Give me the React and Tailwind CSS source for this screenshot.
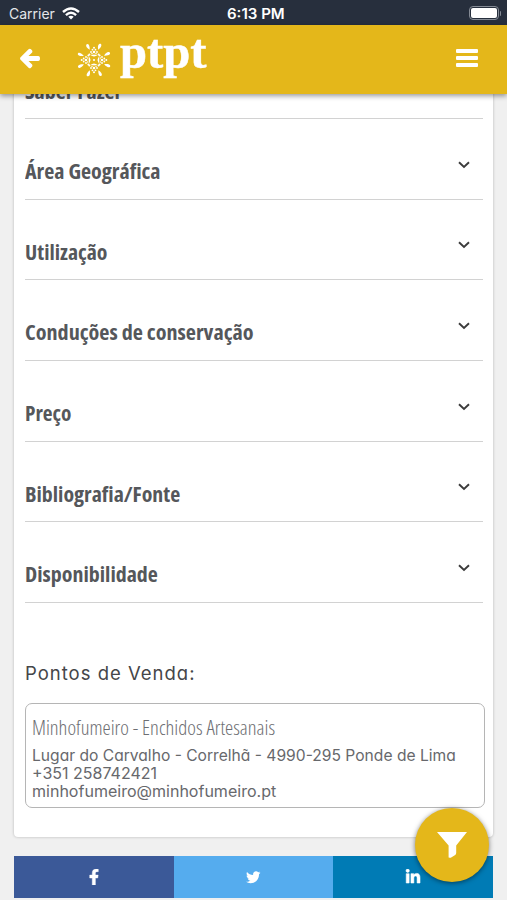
import { useLayoutEffect, useRef, useState } from "react";
import { FaArrowLeft, FaFacebookF, FaLinkedinIn, FaTwitter } from "react-icons/fa";

// Single line of text stretched or condensed horizontally to a given width.
function FitText({ width, className = "", children }) {
  const ref = useRef(null);
  const [scale, setScale] = useState(1);
  useLayoutEffect(() => {
    setScale(width / ref.current.offsetWidth);
  }, [width]);
  return (
    <span className={`block whitespace-nowrap ${className}`} style={{ width }}>
      <span ref={ref} className="inline-block origin-left" style={{ transform: `scaleX(${scale})` }}>
        {children}
      </span>
    </span>
  );
}

const sections = [
  { title: "Saber Fazer", width: 97 },
  { title: "Área Geográfica", width: 136 },
  { title: "Utilização", width: 82 },
  { title: "Conduções de conservação", width: 228.5 },
  { title: "Preço", width: 46.5 },
  { title: "Bibliografia/Fonte", width: 155.5 },
  { title: "Disponibilidade", width: 132.5 },
];

function Wifi() {
  return (
    <svg viewBox="0 0 18 13" className="h-[13px] w-[18px]" fill="none" stroke="white" strokeWidth="2.4">
      <path d="M1 5 Q9 -2.2 17 5" />
      <path d="M3.9 8.1 Q9 3.6 14.1 8.1" />
      <path d="M9 12.6 L6.3 9.8 Q9 7.8 11.7 9.8 Z" fill="white" stroke="none" />
    </svg>
  );
}

function Sun() {
  const quarter = [0, 90, 180, 270];
  return (
    <svg viewBox="-18 -18 36 36" className="h-[36px] w-[36px]" fill="white">
      <circle r="1.1" />
      {quarter.map((a) => (
        <g key={a} transform={`rotate(${a})`}>
          <path d="M-3.6 -4.6 L0 -5.4 L3.6 -4.6 L0 -3.5 Z" />
          <circle cx="0" cy="-12.3" r="1" />
          <circle cx="-1.5" cy="-10.3" r=".9" />
          <circle cx="1.5" cy="-10.3" r=".9" />
          <circle cx="-3" cy="-8" r=".9" />
          <circle cx="0" cy="-8" r="1.3" />
          <circle cx="3" cy="-8" r=".9" />
          <circle cx="-4.6" cy="-5.6" r="1" />
          <circle cx="-2" cy="-6.2" r=".8" />
          <circle cx="2" cy="-6.2" r=".8" />
          <circle cx="4.6" cy="-5.6" r="1" />
        </g>
      ))}
      {[23, 67, 113, 157, 203, 247, 293, 337].map((a) => (
        <path key={a} transform={`rotate(${a})`} d="M0 -11 C-1.9 -13.4 -2.4 -16.2 -1 -17.2 C.9 -18.2 2.3 -15.8 0 -11 Z" />
      ))}
    </svg>
  );
}

function StatusBar() {
  return (
    <div className="grid h-[25px] shrink-0 grid-cols-3 items-center bg-[#272f3d] pt-[2px] font-['Inter','Liberation_Sans',sans-serif] text-[14px] leading-none text-white">
      <div className="flex items-center gap-[7px] pl-[9px] text-[#e4e6ea]">
        <FitText width={46}>Carrier</FitText>
        <Wifi />
      </div>
      <div className="flex justify-center pl-[5px] font-semibold">
        <FitText width={58}>6:13 PM</FitText>
      </div>
      <div className="flex items-center justify-end gap-px pr-[6px]">
        <div className="-mt-px h-[14px] w-[30px] rounded-[4px] border border-[#858b95] p-px">
          <div className="h-full rounded-[2px] bg-white" />
        </div>
        <div className="h-[5px] w-[1.5px] rounded-r bg-[#858b95]" />
      </div>
    </div>
  );
}

function Header() {
  return (
    <header className="z-10 flex h-[69px] shrink-0 items-center bg-[#e4b71a] pr-[29px] pl-[20px] text-white shadow-[0_2px_5px_rgba(0,0,0,0.4)]">
      <FaArrowLeft className="-mt-[2px] h-[21px] w-[20px]" stroke="white" strokeWidth="36" strokeLinejoin="round" />
      <div className="ml-[36px] flex items-center">
        <Sun />
        <div className="-mt-[15px] ml-[8px] h-[52px] font-['Liberation_Serif',serif] text-[48px] leading-[52px] font-bold [-webkit-text-stroke:0.5px_white]">
          <FitText width={86}>ptpt</FitText>
        </div>
      </div>
      <div className="-mt-[3px] ml-auto flex w-[22px] flex-col gap-[3px]">
        <div className="h-[4px] rounded-[1px] bg-white" />
        <div className="h-[4px] rounded-[1px] bg-white" />
        <div className="h-[4px] rounded-[1px] bg-white" />
      </div>
    </header>
  );
}

function Section({ title, width }) {
  return (
    <div className="flex h-[80.67px] justify-between border-b border-[#d2d2d2] pr-[13px]">
      <h2 className="pt-[37px] font-['Open_Sans',sans-serif] text-[21.5px] leading-[30px] font-bold text-[#55575b] [font-stretch:75%]">
        <FitText width={width}>{title}</FitText>
      </h2>
      <svg viewBox="0 0 12 8" className="mt-[41.5px] h-[8px] w-[12px]" fill="none" stroke="#3b3b3b" strokeWidth="1.9">
        <path d="M1 1.3 L6 6 L11 1.3" />
      </svg>
    </div>
  );
}

export default function App() {
  return (
    <div className="relative flex h-[900px] w-[507px] flex-col overflow-hidden bg-[#f0f0f0]">
      <StatusBar />
      <Header />
      <main className="min-h-0 flex-1 overflow-hidden px-[14px]">
        <div className="-mt-[55.5px] h-[798.5px] rounded-[4px] bg-white pr-[8px] pl-[11px] shadow-[0_0_3px_rgba(0,0,0,0.25)]">
          <div className="pr-[2px]">
            {sections.map((s) => (
              <Section key={s.title} {...s} />
            ))}
          </div>
          <div className="font-['Inter','Liberation_Sans',sans-serif] [font-feature-settings:'cv11'_1]">
            <h3 className="mt-[58px] text-[18.5px] leading-[24px] tracking-[1px] text-[#454649]">
              <FitText width={171}>Pontos de Venda:</FitText>
            </h3>
            <div className="mt-[18px] h-[105px] rounded-[7px] border-[1.5px] border-[#b5b5b5] pt-[9px] pl-[6px] text-[15.5px] leading-[18px] text-[#67686c]">
              <div className="font-['Open_Sans',sans-serif] text-[20.5px] leading-[28px] font-light text-[#6d6e72] [font-stretch:75%]">
                <FitText width={243}>Minhofumeiro - Enchidos Artesanais</FitText>
              </div>
              <div className="mt-[6px]">
                <FitText width={424}>Lugar do Carvalho - Correlhã - 4990-295 Ponde de Lima</FitText>
                <FitText width={125}>+351 258742421</FitText>
                <FitText width={244}>minhofumeiro@minhofumeiro.pt</FitText>
              </div>
            </div>
          </div>
        </div>
        <div className="mt-[19px] grid h-[42px] grid-cols-3 text-white">
          <div className="flex items-center justify-center bg-[#3b5998]">
            <FaFacebookF className="h-[16px] w-[10px]" stroke="white" strokeWidth="14" />
          </div>
          <div className="flex items-center justify-center bg-[#55acee]">
            <FaTwitter className="h-[14.5px] w-[14.5px]" />
          </div>
          <div className="flex items-center justify-center bg-[#007bb5]">
            <FaLinkedinIn className="h-[16px] w-[16px]" stroke="white" strokeWidth="18" />
          </div>
        </div>
      </main>
      <button className="absolute top-[808px] left-[415px] z-20 flex h-[74px] w-[74px] items-center justify-center rounded-full bg-[#e4b71a] shadow-[0_1px_5px_rgba(0,0,0,0.5)]">
        <svg viewBox="0 0 30 26" className="h-[26px] w-[30px]" fill="white">
          <path d="M0 0 H30 L19.2 13.5 V21 Q19 22.3 18.2 23 L14.6 25.2 Q13.4 26 11.6 25.6 V13.5 Z" />
        </svg>
      </button>
    </div>
  );
}
